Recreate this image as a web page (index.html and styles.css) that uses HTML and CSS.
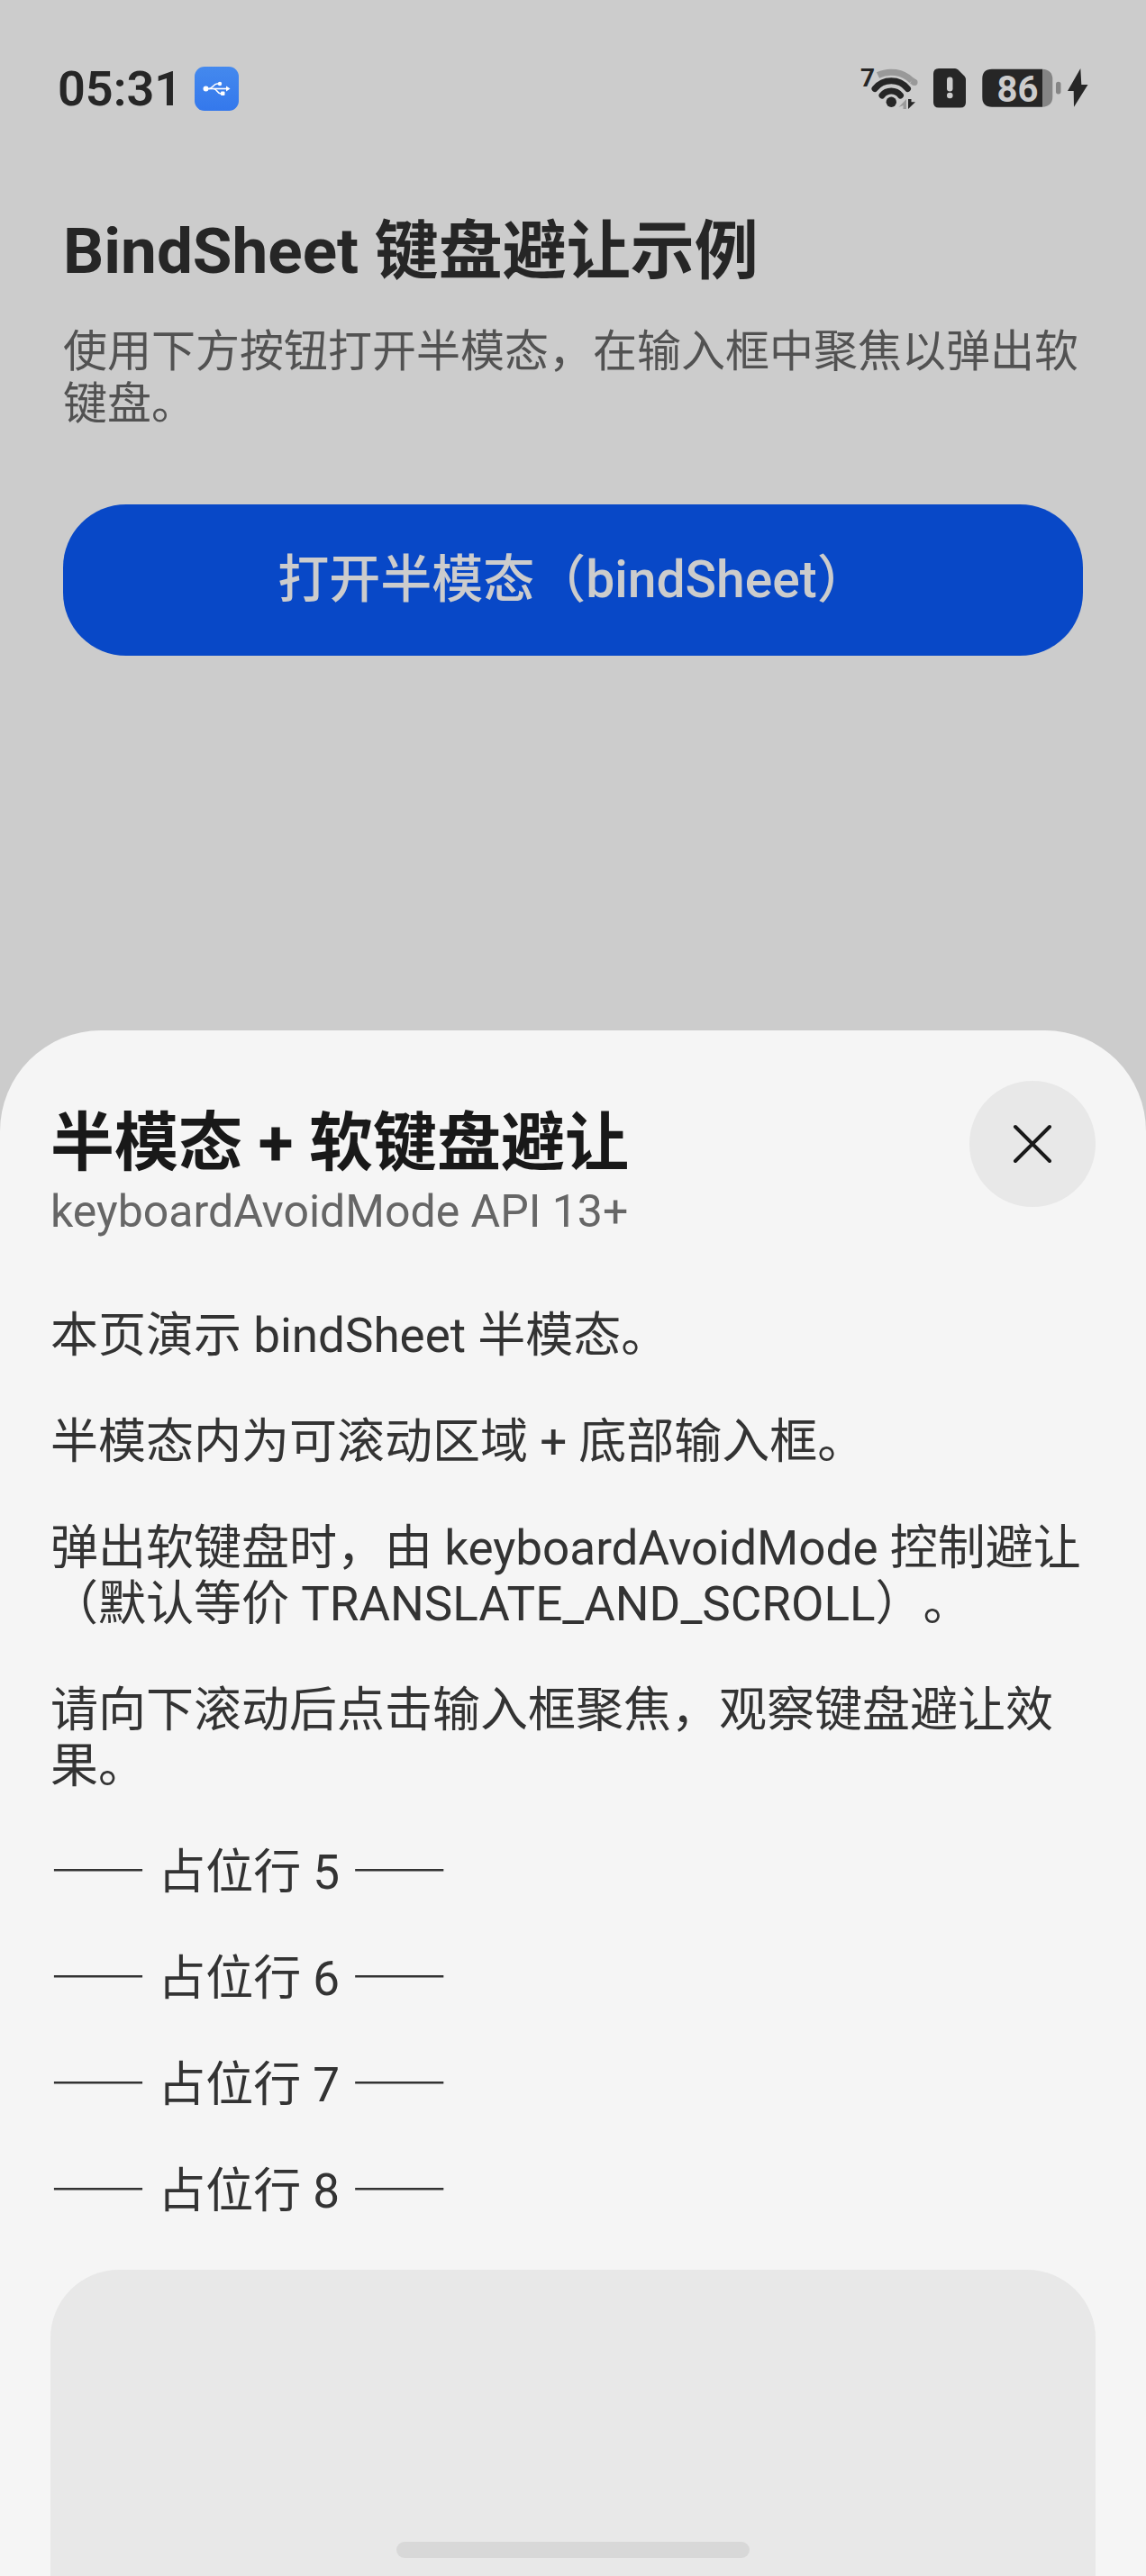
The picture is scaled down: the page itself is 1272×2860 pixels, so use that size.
FILE: index.html
```
<!DOCTYPE html>
<html lang="zh-CN">
<head>
  <meta charset="utf-8">
  <meta name="viewport" content="width=device-width, initial-scale=1">
  <title>BindSheet 键盘避让示例</title>
  <link rel="stylesheet" href="styles.css">
</head>
<body>
  <header class="status-bar">
    <span class="time">05:31</span>
    <svg class="usb-icon" width="50" height="50" viewBox="0 0 50 50">
      <defs>
        <linearGradient id="usb-bg" x1="0" y1="0" x2="0" y2="1">
          <stop offset="0" stop-color="#4489ee"/>
          <stop offset="1" stop-color="#3478ec"/>
        </linearGradient>
      </defs>
      <rect width="49" height="49" rx="11" fill="url(#usb-bg)"/>
      <g fill="none" stroke="#fff" stroke-width="1.6">
        <path d="M12 24.5H36"/>
        <path d="M16 24.5C20 24.5 21 19 25 19H28"/>
        <path d="M21 24.5C25 24.5 25 30 29 30H31"/>
      </g>
      <circle cx="12.5" cy="24.5" r="3" fill="#fff"/>
      <circle cx="28" cy="19" r="2.2" fill="#fff"/>
      <rect x="29" y="27.5" width="4.5" height="4.5" rx="1" fill="#fff"/>
      <path d="M35 21.5L39.500 24.500L35 27.500Z" fill="#fff"/>
    </svg>
    <div class="status-icons">
      <svg width="66" height="50" viewBox="0 0 66 50">
        <text class="wifi-gen" x="1" y="22">7</text>
        <g fill="none" stroke-width="7">
          <path d="M20.500 9.500A33 33 0 0 1 58 15.500" stroke="#999"/>
          <circle cx="61" cy="17.500" r="3.500" fill="#999"/>
          <path d="M58 15.500L61 17.500" stroke="#999"/>
          <path d="M17 24.500A23.500 23.500 0 0 1 53.500 24.500" stroke="#262626" stroke-linecap="round"/>
          <path d="M25 32A13 13 0 0 1 45.500 32" stroke="#262626" stroke-linecap="round"/>
        </g>
        <circle cx="35.300" cy="39.300" r="5.700" fill="#262626"/>
        <path d="M52 36V47H48.500V43L43.500 45Z" fill="#999"/>
        <path d="M54 36H57.500V39.300H62L54 47Z" fill="#262626"/>
      </svg>
      <svg width="36" height="50" viewBox="0 0 36 50">
        <path d="M6 2H24Q26 2 27.500 3.500L34.500 10.500Q36 12 36 14V39.500Q36 45.500 30 45.500H6Q0 45.500 0 39.500V8Q0 2 6 2Z" fill="#262626"/>
        <rect x="15" y="11.500" width="6.500" height="16" rx="3.200" fill="#ccc"/>
        <circle cx="18.300" cy="32" r="3.300" fill="#ccc"/>
      </svg>
      <svg width="120" height="50" viewBox="0 0 120 50">
        <path d="M13 2.700H69V44.700H13Q2.300 44.700 2.300 34V13.400Q2.300 2.700 13 2.700Z" fill="#262626"/>
        <path d="M69 2.700Q80.300 3.500 80.300 14V33.400Q80.300 43.900 69 44.700Z" fill="#858585"/>
        <rect x="84" y="16.700" width="5.500" height="13.700" rx="2.700" fill="#858585"/>
        <text class="battery-level" x="41.500" y="38.500">86</text>
        <path d="M111.300 2L97 27H103.700L104 44.700L119.500 20H112.300Z" fill="#262626"/>
      </svg>
    </div>
  </header>

  <main class="page">
    <h1>BindSheet 键盘避让示例</h1>
    <p class="page-desc">使用下方按钮打开半模态，在输入框中聚焦以弹出软键盘。</p>
    <button type="button" class="open-button">打开半模态（bindSheet）</button>
  </main>

  <section class="sheet">
    <div class="sheet-header">
      <div class="sheet-titles">
        <h2>半模态 + 软键盘避让</h2>
        <p class="sheet-subtitle">keyboardAvoidMode API 13+</p>
      </div>
      <button type="button" class="close-button" aria-label="关闭">
        <svg width="48" height="48" viewBox="0 0 48 48">
          <path d="M5 5L43 43M43 5L5 43" fill="none" stroke="#191919" stroke-width="4" stroke-linecap="round"/>
        </svg>
      </button>
    </div>
    <div class="sheet-content">
      <p>本页演示 bindSheet 半模态。</p>
      <p>半模态内为可滚动区域 + 底部输入框。</p>
      <p>弹出软键盘时，由 keyboardAvoidMode 控制避让（默认等价 TRANSLATE_AND_SCROLL）。</p>
      <p>请向下滚动后点击输入框聚焦，观察键盘避让效果。</p>
      <p><span class="dash">——</span> 占位行 5 <span class="dash">——</span></p>
      <p><span class="dash">——</span> 占位行 6 <span class="dash">——</span></p>
      <p><span class="dash">——</span> 占位行 7 <span class="dash">——</span></p>
      <p><span class="dash">——</span> 占位行 8 <span class="dash">——</span></p>
      <div class="block"></div>
    </div>
  </section>

  <div class="home-indicator"></div>
</body>
</html>
```
FILE: styles.css
```
* {
  box-sizing: border-box;
}
body {
  margin: 0;
  min-height: 100vh;
  display: flex;
  flex-direction: column;
  background-color: #ccc;
  font-family: Roboto, "Noto Sans CJK SC", sans-serif;
  text-spacing-trim: space-all;
}
h1, h2, p {
  margin: 0;
}
button {
  border: none;
  font-family: inherit;
  cursor: pointer;
}
svg {
  display: block;
  overflow: visible;
}

/* Status bar */
.status-bar {
  display: flex;
  align-items: center;
  gap: 14px;
  padding: 74px 64px 0;
}
.time {
  font-size: 54px;
  line-height: 50px;
  font-weight: 600;
  color: #262626;
}
.status-icons {
  display: flex;
  gap: 16px;
  margin-left: auto;
}
.wifi-gen {
  font-size: 28px;
  font-weight: 700;
  fill: #262626;
}
.battery-level {
  font-size: 40px;
  font-weight: 700;
  text-anchor: middle;
  fill: #ccc;
}

/* Page behind the sheet */
.page {
  padding: 114px 70px 0;
}
h1, h2 {
  font-size: 71px;
  line-height: 82px;
  font-weight: 700;
}
h1 {
  color: #262626;
}
.page-desc {
  margin-top: 42px;
  font-size: 49px;
  line-height: 58px;
  color: #525252;
}
.open-button {
  display: block;
  width: 100%;
  height: 168px;
  margin-top: 82px;
  padding: 0 0 12px;
  border-radius: 70px;
  background-color: #0848c7;
  color: #ccc;
  font-size: 57px;
  font-weight: 500;
}

/* Sheet */
.sheet {
  flex: 1;
  display: flex;
  flex-direction: column;
  margin-top: 416px;
  padding: 56px 56px 0;
  border-radius: 112px 112px 0 0;
  background-color: #f5f5f5;
}
.sheet-header {
  display: flex;
  justify-content: space-between;
  align-items: flex-start;
}
.sheet-titles {
  padding-top: 28px;
}
h2 {
  color: #191919;
}
.sheet-subtitle {
  margin-top: 6px;
  font-size: 50px;
  line-height: 58px;
  color: #666;
}
.close-button {
  display: flex;
  justify-content: center;
  align-items: center;
  width: 140px;
  height: 140px;
  padding: 0;
  border-radius: 50%;
  background-color: #e8e8e8;
}
.sheet-content {
  flex: 1;
  display: flex;
  flex-direction: column;
  gap: 56px;
  padding-top: 78px;
  font-size: 53px;
  line-height: 62px;
  color: #333;
}
.dash {
  font-family: "Noto Sans CJK SC", sans-serif;
  font-weight: 700;
  line-height: 1;
}
.block {
  flex: 1;
  min-height: 340px;
  border-radius: 76px 76px 0 0;
  background-color: #e8e8e8;
}

.home-indicator {
  position: fixed;
  left: 50%;
  bottom: 20px;
  width: 392px;
  height: 18px;
  margin-left: -196px;
  border-radius: 9px;
  background-color: #d8d8d8;
}
```
